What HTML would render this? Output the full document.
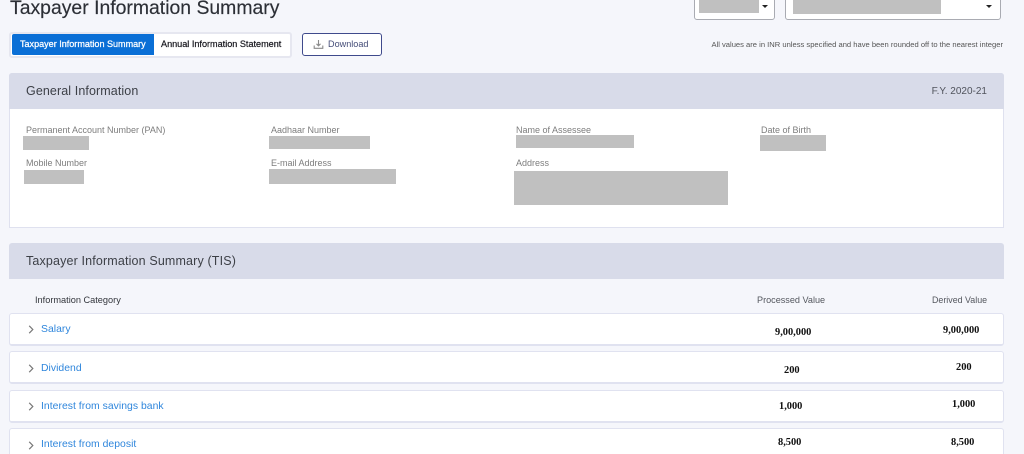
<!DOCTYPE html>
<html><head><meta charset="utf-8">
<style>
html,body{margin:0;padding:0;width:1024px;height:454px;overflow:hidden;background:#f5f6fb;font-family:"Liberation Sans",sans-serif;}
#w{position:absolute;left:0;top:0;width:1024px;height:454px;overflow:hidden;}
.a{position:absolute;white-space:nowrap;}
.box{position:absolute;box-sizing:border-box;}
.g{position:absolute;background:#c0c0c0;}
.lab{position:absolute;white-space:nowrap;font-size:9px;line-height:12px;color:#7d7d7d;}
.row{position:absolute;left:9px;width:995px;height:33px;box-sizing:border-box;background:#fff;border:1px solid #e0e2f0;border-bottom:2px solid #e0e2f0;border-radius:3px;}
.nm{position:absolute;left:41px;white-space:nowrap;font-size:10.4px;line-height:14px;color:#2f86dc;letter-spacing:.03px;}
.v{position:absolute;white-space:nowrap;font-family:"Liberation Serif",serif;font-weight:bold;font-size:10.4px;line-height:14px;color:#111;}
svg{position:absolute;}
</style></head><body><div id="w">
<div class="a" style="left:10px;top:-5px;font-size:19.4px;line-height:26px;color:#2c2f36;-webkit-text-stroke:.15px #2c2f36;">Taxpayer Information Summary</div>

<div class="box" style="left:694px;top:-6px;width:81px;height:26px;background:#fff;border:1px solid #a9abb2;border-radius:3px;"></div>
<div class="g" style="left:699px;top:-2px;width:60px;height:15px;"></div>
<div style="position:absolute;left:762px;top:5px;width:0;height:0;border-left:3px solid transparent;border-right:3px solid transparent;border-top:3px solid #222;"></div>
<div class="box" style="left:785px;top:-6px;width:216px;height:26px;background:#fff;border:1px solid #a9abb2;border-radius:3px;"></div>
<div class="g" style="left:793px;top:-2px;width:148px;height:16px;"></div>
<div style="position:absolute;left:986px;top:5px;width:0;height:0;border-left:3px solid transparent;border-right:3px solid transparent;border-top:3px solid #222;"></div>

<div class="box" style="left:9px;top:32px;width:283px;height:26px;background:#fff;border:2px solid #e6e7f0;border-radius:3px;"></div>
<div class="box" style="left:12px;top:34px;width:142px;height:21px;background:#0a6fd6;border-radius:2px 0 0 2px;"></div>
<div class="a" style="left:20px;top:38px;font-size:9.05px;line-height:13px;color:#fff;-webkit-text-stroke:.25px #fff;">Taxpayer Information Summary</div>
<div class="a" style="left:161px;top:38px;font-size:9.1px;line-height:13px;color:#15151c;-webkit-text-stroke:.2px #15151c;">Annual Information Statement</div>

<div class="box" style="left:302px;top:33px;width:80px;height:23px;background:#fff;border:1px solid #3f4a8c;border-radius:3px;"></div>
<svg style="left:313px;top:39px" width="11" height="11" viewBox="0 0 11 11"><path d="M5.5 1V6.5M3.5 4.8L5.5 6.8L7.5 4.8M1.2 6.5V9.3H9.8V6.5" fill="none" stroke="#8b8b8b" stroke-width="1.1"/></svg>
<div class="a" style="left:328px;top:38px;font-size:9.1px;line-height:13px;color:#454d78;">Download</div>

<div class="a" style="right:21px;top:39px;font-size:7.6px;line-height:11px;color:#555;">All values are in INR unless specified and have been rounded off to the nearest integer</div>

<div class="box" style="left:9px;top:73px;width:995px;height:155px;background:#fff;border:1px solid #dfe1ef;border-radius:3px 3px 0 0;"></div>
<div class="box" style="left:9px;top:73px;width:995px;height:36px;background:#d8dbe9;border-radius:3px 3px 0 0;"></div>
<div class="a" style="left:26px;top:83px;font-size:12.5px;line-height:17px;color:#3d4047;letter-spacing:.1px;">General Information</div>
<div class="a" style="right:37px;top:85px;font-size:10px;line-height:13px;color:#50535c;">F.Y. 2020-21</div>

<div class="lab" style="left:26px;top:124px;">Permanent Account Number (PAN)</div>
<div class="g" style="left:23px;top:136px;width:66px;height:14px;"></div>
<div class="lab" style="left:271px;top:124px;">Aadhaar Number</div>
<div class="g" style="left:269px;top:136px;width:101px;height:13px;"></div>
<div class="lab" style="left:516px;top:124px;">Name of Assessee</div>
<div class="g" style="left:516px;top:135px;width:118px;height:13px;"></div>
<div class="lab" style="left:761px;top:124px;">Date of Birth</div>
<div class="g" style="left:760px;top:135px;width:66px;height:16px;"></div>

<div class="lab" style="left:26px;top:157px;">Mobile Number</div>
<div class="g" style="left:24px;top:170px;width:60px;height:14px;"></div>
<div class="lab" style="left:271px;top:157px;">E-mail Address</div>
<div class="g" style="left:269px;top:169px;width:127px;height:15px;"></div>
<div class="lab" style="left:516px;top:157px;">Address</div>
<div class="g" style="left:514px;top:171px;width:214px;height:34px;"></div>

<div class="box" style="left:9px;top:243px;width:995px;height:36px;background:#d8dbe9;border-radius:3px 3px 0 0;"></div>
<div class="a" style="left:26px;top:253px;font-size:12.5px;line-height:17px;color:#3d4047;letter-spacing:.15px;">Taxpayer Information Summary (TIS)</div>

<div class="a" style="left:35px;top:294px;font-size:9.2px;line-height:13px;color:#33363c;">Information Category</div>
<div class="a" style="left:757px;top:294px;font-size:9.1px;line-height:13px;color:#55585f;">Processed Value</div>
<div class="a" style="left:932px;top:294px;font-size:8.9px;line-height:13px;color:#55585f;">Derived Value</div>

<div class="row" style="top:313px;"></div>
<div class="row" style="top:351px;"></div>
<div class="row" style="top:390px;"></div>
<div class="row" style="top:428px;height:33px;"></div>

<svg style="left:27px;top:325px" width="8" height="9" viewBox="0 0 8 9"><path d="M2.2 .8L5.8 4.5L2.2 8.2" fill="none" stroke="#777" stroke-width="1.2"/></svg>
<svg style="left:27px;top:364px" width="8" height="9" viewBox="0 0 8 9"><path d="M2.2 .8L5.8 4.5L2.2 8.2" fill="none" stroke="#777" stroke-width="1.2"/></svg>
<svg style="left:27px;top:402px" width="8" height="9" viewBox="0 0 8 9"><path d="M2.2 .8L5.8 4.5L2.2 8.2" fill="none" stroke="#777" stroke-width="1.2"/></svg>
<svg style="left:27px;top:441px" width="8" height="9" viewBox="0 0 8 9"><path d="M2.2 .8L5.8 4.5L2.2 8.2" fill="none" stroke="#777" stroke-width="1.2"/></svg>

<div class="nm" style="top:323px;">Salary</div>
<div class="nm" style="top:362px;">Dividend</div>
<div class="nm" style="top:400px;">Interest from savings bank</div>
<div class="nm" style="top:438px;">Interest from deposit</div>

<div class="v" style="left:775px;top:326px;">9,00,000</div>
<div class="v" style="left:943px;top:324px;">9,00,000</div>
<div class="v" style="left:784px;top:364px;">200</div>
<div class="v" style="left:956px;top:361px;">200</div>
<div class="v" style="left:779px;top:400px;">1,000</div>
<div class="v" style="left:952px;top:398px;">1,000</div>
<div class="v" style="left:778px;top:436px;">8,500</div>
<div class="v" style="left:951px;top:436px;">8,500</div>
</div></body></html>
